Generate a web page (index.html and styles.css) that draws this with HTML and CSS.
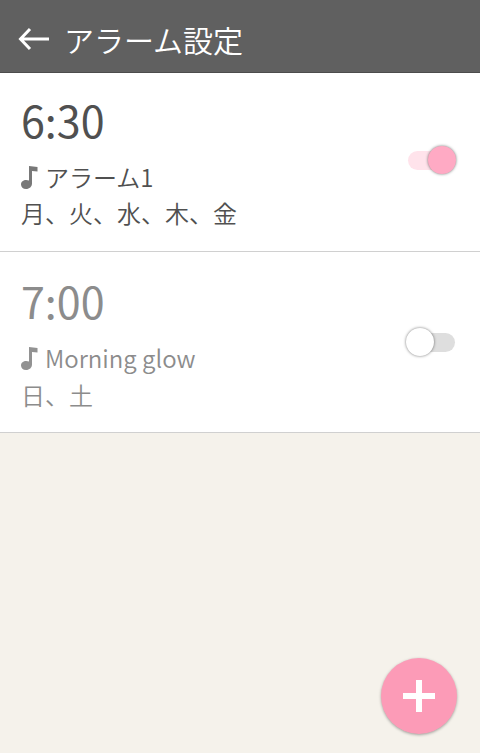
FILE: index.html
```html
<!DOCTYPE html>
<html lang="ja">
<head>
<meta charset="utf-8">
<meta name="viewport" content="width=device-width, initial-scale=1">
<title>アラーム設定</title>
<link rel="stylesheet" href="styles.css">
</head>
<body>
<header class="bar">
  <button class="back" type="button" aria-label="戻る">
    <svg width="32" height="24" viewBox="0 0 32 24" fill="none" stroke="#fff" stroke-width="3"><path d="M32 12H4M13 2L3.500 12l9.500 10"/></svg>
  </button>
  <h1 class="title">アラーム設定</h1>
</header>
<main>
  <ul class="alarms">
    <li class="alarm">
      <label class="info" for="alarm-1">
        <span class="time">6:30</span>
        <span class="sound">
          <svg class="note" width="17" height="23" viewBox="0 0 17 23"><path d="M8 0L16.500 1V5.500L11 5V17.500C11 20.500 8.500 23 5 23C2 23 0 21 0 18.500C0 15.500 2.500 14 5 14C6.200 14 7.200 14.200 8 14.600Z"/></svg>
          <span>アラーム1</span>
        </span>
        <span class="days">月、火、水、木、金</span>
      </label>
      <input class="switch" id="alarm-1" type="checkbox" role="switch" checked>
    </li>
    <li class="alarm alarm-off">
      <label class="info" for="alarm-2">
        <span class="time">7:00</span>
        <span class="sound">
          <svg class="note" width="17" height="23" viewBox="0 0 17 23"><path d="M8 0L16.500 1V5.500L11 5V17.500C11 20.500 8.500 23 5 23C2 23 0 21 0 18.500C0 15.500 2.500 14 5 14C6.200 14 7.200 14.200 8 14.600Z"/></svg>
          <span>Morning glow</span>
        </span>
        <span class="days">日、土</span>
      </label>
      <input class="switch" id="alarm-2" type="checkbox" role="switch">
    </li>
  </ul>
</main>
<button class="add" type="button" aria-label="アラームを追加">
  <svg width="34" height="34" viewBox="0 0 34 34" fill="#fff"><path d="M14 1h6v13h13v6H20v13h-6V20H1v-6h13z"/></svg>
</button>
</body>
</html>
```
FILE: styles.css
```css
* {
  box-sizing: border-box;
}

body {
  margin: 0;
  min-height: 100vh;
  background: #f5f2eb;
  color: #505050;
  font-family: "Noto Sans CJK JP", "Noto Sans", sans-serif;
}

button {
  border: 0;
  padding: 0;
  cursor: pointer;
}

svg {
  display: block;
}

.bar {
  display: flex;
  align-items: center;
  gap: 15px;
  height: 73px;
  padding: 6px 17px 0;
  background: #606060;
  border-bottom: 1px solid #4c4c4c;
}

.back {
  background: none;
}

.title {
  margin: 0;
  color: #fff;
  font-size: 30px;
  font-weight: 350;
  line-height: 38px;
}

.alarms {
  margin: 0;
  padding: 0;
  list-style: none;
}

.alarm {
  display: flex;
  align-items: center;
  justify-content: space-between;
  padding: 16px 21px 20px;
  background: #fff;
  border-bottom: 1px solid #d0d0d0;
}

.info {
  display: flex;
  flex-direction: column;
  flex: 1;
}

.time {
  font-size: 43px;
  font-weight: 400;
  line-height: 60px;
}

.sound {
  display: flex;
  align-items: center;
  gap: 7px;
  margin-top: 10px;
}

.sound,
.days {
  font-size: 24px;
  font-weight: 350;
  line-height: 36px;
}

.note {
  fill: #787878;
}

.alarm-off {
  padding-top: 18px;
  padding-bottom: 18px;
  color: #8c8c8c;
}

.alarm-off .days {
  line-height: 38px;
}

.alarm-off .note {
  fill: #929292;
}

.switch {
  appearance: none;
  display: flex;
  align-items: center;
  position: relative;
  width: 48px;
  height: 28px;
  margin: 0 3px 0 0;
  cursor: pointer;
}

.switch::before {
  content: "";
  width: 47px;
  height: 19px;
  border-radius: 10px;
  background: #dedede;
}

.switch::after {
  content: "";
  position: absolute;
  left: -2px;
  top: 0;
  width: 28px;
  height: 28px;
  border-radius: 50%;
  background: #fff;
  box-shadow: 0 0 3px rgba(0, 0, 0, 0.55);
}

.switch:checked::before {
  background: #ffe3eb;
}

.switch:checked::after {
  left: auto;
  right: 0;
  background: #ffaac4;
}

.add {
  position: fixed;
  right: 23px;
  bottom: 19px;
  display: grid;
  place-items: center;
  width: 76px;
  height: 76px;
  border-radius: 50%;
  background: #fc9bb7;
  box-shadow: 0 1px 3px rgba(0, 0, 0, 0.35);
}
```
